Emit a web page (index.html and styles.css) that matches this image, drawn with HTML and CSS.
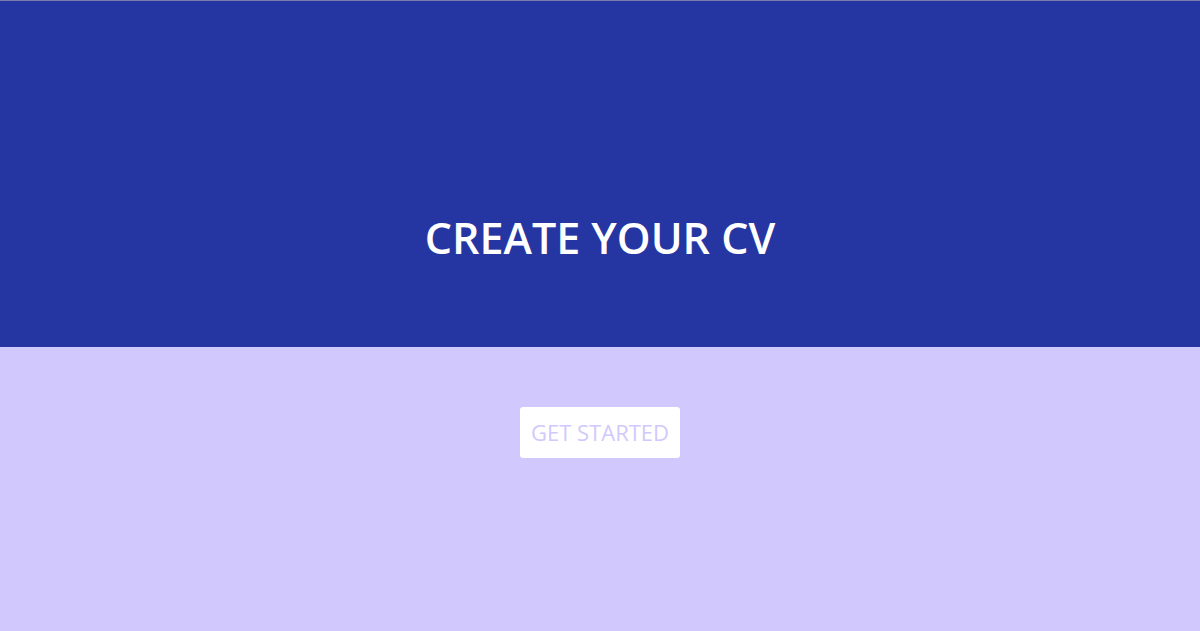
FILE: index.html
```html
<!DOCTYPE html>
<html>
<head>
<meta charset="utf-8">
<link rel="stylesheet" href="styles.css">
</head>
<body>
<header class="hero">
  <h1 class="title">CREATE YOUR CV</h1>
</header>
<main class="content">
  <button class="start">GET STARTED</button>
</main>
</body>
</html>
```
FILE: styles.css
```css
html, body {
  margin: 0;
  padding: 0;
  height: 100%;
}
body {
  font-family: "Open Sans", "Liberation Sans", sans-serif;
  background: #d1c9fd;
  border-top: 1px solid #7c7dad;
  box-sizing: border-box;
}
.hero {
  background: #2536a3;
  height: 346px;
  box-sizing: border-box;
  padding-top: 205px;
  text-align: center;
}
.title {
  margin: 0;
  color: #ffffff;
  font-size: 43px;
  font-weight: 600;
  line-height: 64px;
  letter-spacing: 0;
}
.content {
  display: flex;
  justify-content: center;
  padding-top: 60px;
}
.start {
  width: 160px;
  height: 51px;
  background: #ffffff;
  border: none;
  border-radius: 3px;
  color: #d1c9fd;
  font-family: "Open Sans", "Liberation Sans", sans-serif;
  font-size: 22px;
  line-height: 49px;
  padding: 0;
}
```
